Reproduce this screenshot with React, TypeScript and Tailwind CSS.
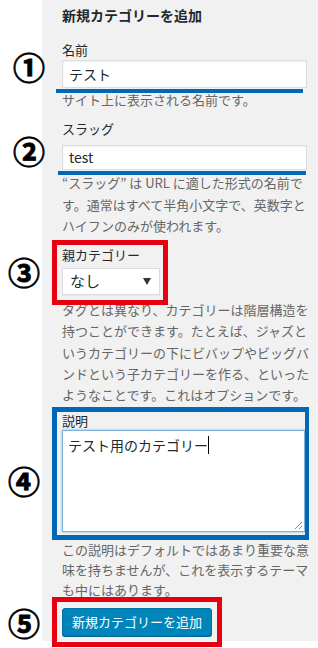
import React from 'react';

const jp = "font-['Noto_Sans_CJK_JP','Noto_Sans',sans-serif]";

function Mark({ n, top }: { n: string; top: string }) {
  return (
    <span
      className={`absolute left-[-50px] ${top} w-[34px] text-center text-[32px] leading-[32px] font-bold text-black [-webkit-text-stroke:0.8px_black]`}
    >
      {n}
    </span>
  );
}

function Help({ lines, lh = 'leading-[21.3px]' }: { lines: string[]; lh?: string }) {
  return (
    <p className={`text-[13px] ${lh} text-[#666] whitespace-nowrap`}>
      {lines.map((l, i) => (
        <span key={i} className="block">
          {l}
        </span>
      ))}
    </p>
  );
}

export default function App() {
  return (
    <div className={`w-[318px] h-[648px] bg-white overflow-hidden ${jp}`}>
      <div className="ml-[42px] h-[641px] bg-[#f1f1f1] pl-[20px] pr-[11px] pt-[5px] text-[#23282d]">
        <h2 className="text-[14px] leading-[20px] font-bold">新規カテゴリーを追加</h2>

        {/* 名前 */}
        <div className="mt-[15px]">
          <label className="block text-[13px] leading-[20px]">名前</label>
          <div className="relative">
            <Mark n="①" top="top-[-10px]" />
            <div className="h-[28px] border border-[#ddd] bg-white px-[6px] text-[14px] leading-[26px] shadow-[inset_0_1px_2px_rgba(0,0,0,0.07)]">
              テスト
            </div>
            <div className="absolute left-[-6px] top-[29px] h-[4px] w-[247px] bg-[#0068b6]" />
          </div>
          <div className="mt-[1px]">
            <Help lines={['サイト上に表示される名前です。']} />
          </div>
        </div>

        {/* スラッグ */}
        <div className="mt-[9px]">
          <label className="block text-[13px] leading-[20px]">スラッグ</label>
          <div className="relative mt-[6px]">
            <Mark n="②" top="top-[-11px]" />
            <div className="h-[25px] border border-[#ddd] bg-white px-[6px] text-[14px] leading-[23px] shadow-[inset_0_1px_2px_rgba(0,0,0,0.07)]">
              test
            </div>
            <div className="absolute left-[-4px] top-[26px] h-[3.5px] w-[248px] bg-[#0068b6]" />
          </div>
          <div className="mt-[2px]">
            <Help
              lines={[
                '“スラッグ” は URL に適した形式の名前で',
                'す。通常はすべて半角小文字で、英数字と',
                'ハイフンのみが使われます。',
              ]}
            />
          </div>
        </div>

        {/* 親カテゴリー */}
        <div className="relative z-10 mt-[4px] -ml-[10px] -mb-[6px] w-[116px] border-[5px] border-[#e60012] pl-[5px] pr-[3px] pb-[5px]">
          <Mark n="③" top="top-[10px] left-[-45px]" />
          <label className="block text-[13px] leading-[20px]">親カテゴリー</label>
          <div className="mt-[3px] flex h-[27px] items-center justify-between border border-[#ddd] bg-white pl-[7px] pr-[8px] text-[15px] shadow-[0_1px_1px_rgba(0,0,0,0.04)]">
            <span>なし</span>
            <svg width="8" height="7" viewBox="0 0 8 7">
              <path d="M0 0h8L4 7z" fill="#333" />
            </svg>
          </div>
        </div>
        <Help
          lines={[
            'タグとは異なり、カテゴリーは階層構造を',
            '持つことができます。たとえば、ジャズと',
            'いうカテゴリーの下にビバップやビッグバ',
            'ンドという子カテゴリーを作る、といった',
            'ようなことです。これはオプションです。',
          ]}
        />

        {/* 説明 */}
        <div className="relative -ml-[10px] mt-[1px] w-[257px] border-[5px] border-r-[4px] border-[#0068b6] pl-[5px] pb-[3px]">
          <Mark n="④" top="top-[52px] left-[-45px]" />
          <label className="block text-[13px] leading-[18px]">説明</label>
          <div className="relative h-[102px] border border-[#7fb2d8] bg-white px-[5px] pt-[2px] text-[14px] leading-[24px] shadow-[0_0_2px_rgba(30,140,190,0.6)]">
            <span>テスト用のカテゴリー</span>
            <span className="inline-block h-[18px] w-[1px] align-[-3px] bg-black" />
            <svg className="absolute right-[1px] bottom-[1px]" width="9" height="9" viewBox="0 0 9 9">
              <path d="M8 1L1 8M8 5L5 8" stroke="#888" strokeWidth="1" />
            </svg>
          </div>
        </div>
        <Help
          lh="leading-[20px]"
          lines={[
            'この説明はデフォルトではあまり重要な意',
            '味を持ちませんが、これを表示するテーマ',
            'も中にはあります。',
          ]}
        />

        {/* button */}
        <div className="relative -ml-[10px] -mt-[3px] w-[170px] border-[5px] border-[#e60012] px-[5px] py-[6px]">
          <Mark n="⑤" top="top-[4px] left-[-45px]" />
          <div className="flex h-[28px] items-center justify-center rounded-[3px] border border-[#0073aa] bg-[#0085ba] text-[13px] text-white shadow-[0_1px_0_#006799]">
            新規カテゴリーを追加
          </div>
        </div>
      </div>
    </div>
  );
}
